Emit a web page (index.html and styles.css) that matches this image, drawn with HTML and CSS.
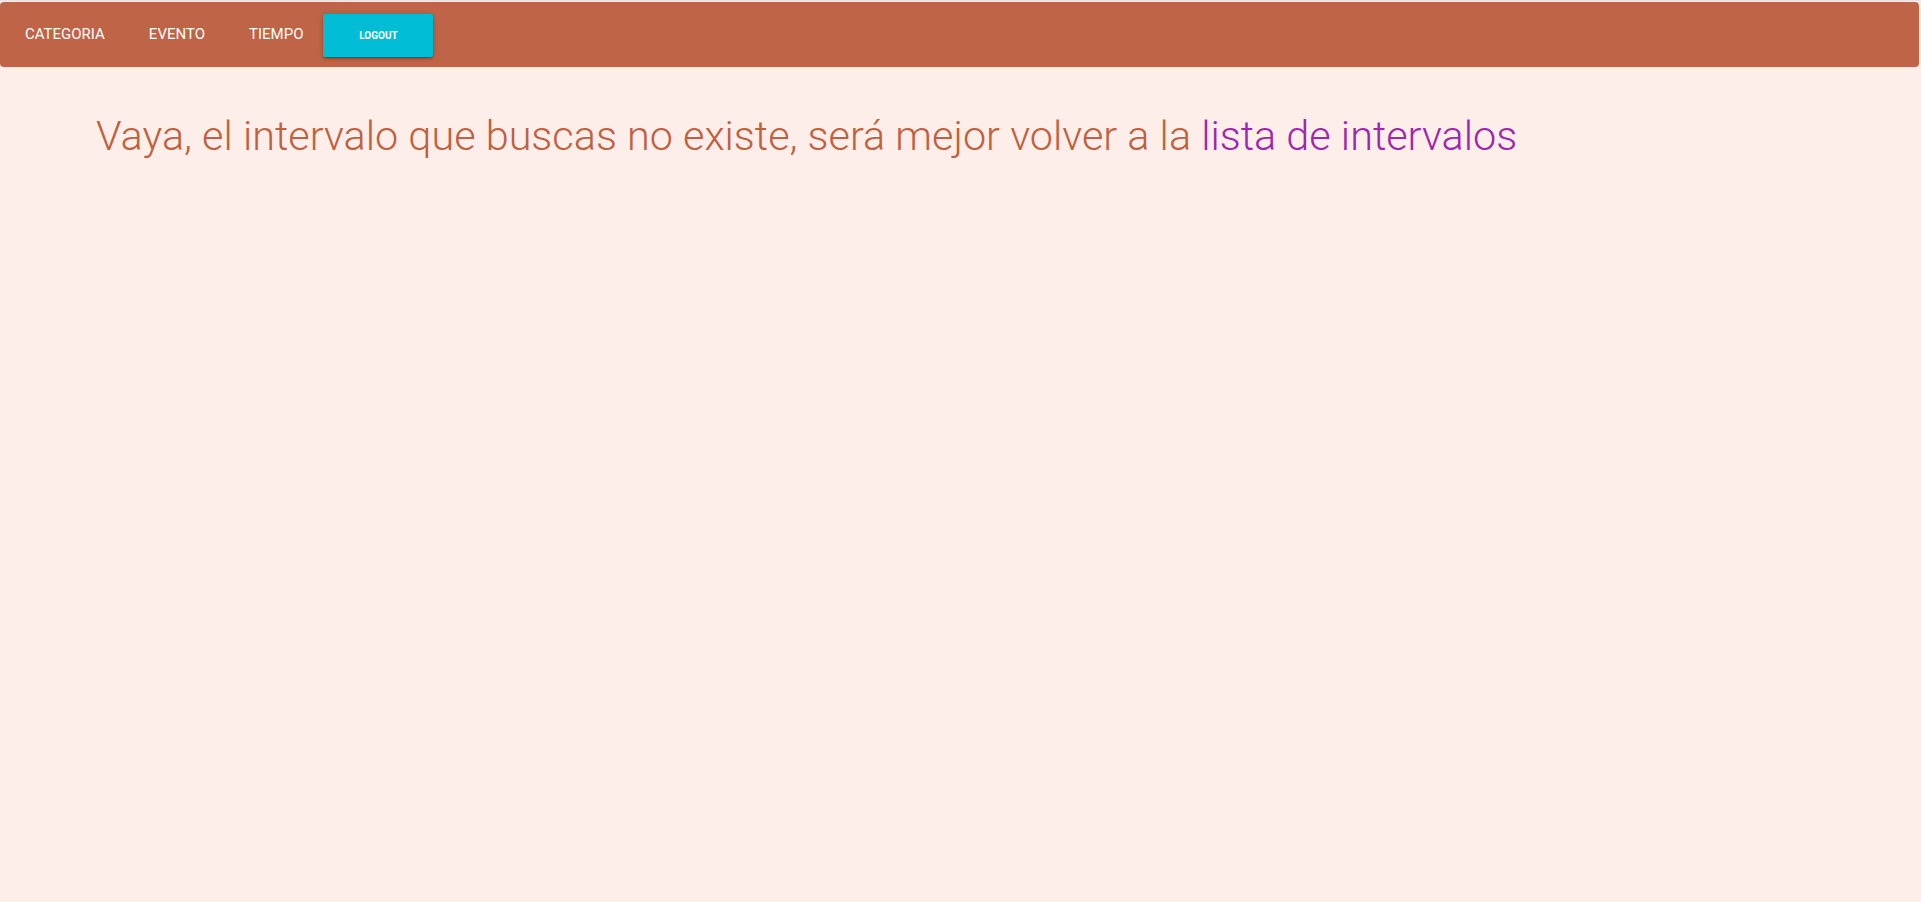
FILE: index.html
```html
<!DOCTYPE html>
<html lang="es">
<head>
<meta charset="utf-8">
<title>Intervalo no encontrado</title>
<link rel="stylesheet" href="styles.css">
</head>
<body>
<nav class="navbar">
  <ul class="nav-links">
    <li><a href="#">CATEGORIA</a></li>
    <li><a href="#">EVENTO</a></li>
    <li><a href="#">TIEMPO</a></li>
  </ul>
  <button class="logout">LOGOUT</button>
</nav>
<main class="container">
  <h3 class="message">Vaya, el intervalo que buscas no existe, será mejor volver a la <a href="#">lista de intervalos</a></h3>
</main>
</body>
</html>
```

FILE: styles.css
```css
html, body {
  margin: 0;
  padding: 0;
  height: 100%;
}
body {
  background: #fdeeea;
  font-family: Roboto, "Noto Sans", sans-serif;
  border-top: 1px solid #e4e4e4;
  box-sizing: border-box;
}
.navbar {
  margin: 1px 2px 0 0;
  height: 65px;
  background: #bf6446;
  border-radius: 4px;
  display: flex;
  align-items: center;
}
.nav-links {
  list-style: none;
  margin: 0;
  padding: 0 0 0 3px;
  display: flex;
}
.nav-links a {
  display: block;
  padding: 0 22px;
  color: #fff;
  text-decoration: none;
  font-size: 15px;
  line-height: 65px;
}
.logout {
  width: 110px;
  height: 43px;
  margin-left: -2px;
  margin-top: 1px;
  border: none;
  border-radius: 2px;
  background: #00bcd4;
  color: #fff;
  font-family: Roboto, sans-serif;
  font-weight: 700;
  font-size: 10px;
  box-shadow: 0 2px 2px 0 rgba(0,0,0,0.14), 0 3px 1px -2px rgba(0,0,0,0.12), 0 1px 5px 0 rgba(0,0,0,0.2);
}
.container {
  padding: 0 0 0 96px;
}
.message {
  margin: 47px 0 0 0;
  font-size: 41.4px;
  font-weight: 300;
  line-height: 45.5px;
  color: #c0603f;
}
.message a {
  color: #9c27b0;
  text-decoration: none;
}
```
